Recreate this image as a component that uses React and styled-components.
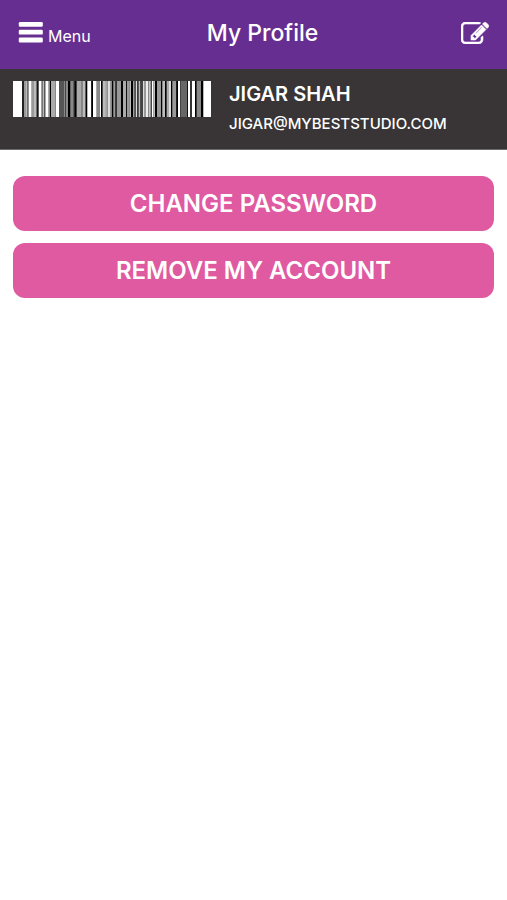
import React from "react";
import styled, { createGlobalStyle } from "styled-components";

const GlobalStyle = createGlobalStyle`
  *, *::before, *::after { box-sizing: border-box; }
  body {
    margin: 0;
    background: #fff;
    color: #fff;
    font-family: Inter, "Open Sans", sans-serif;
  }
`;

const Header = styled.header`
  display: grid;
  grid-template-columns: 1fr auto 1fr;
  align-items: center;
  height: 69px;
  padding: 0 18px 3px;
  background: #672e91;
`;

const HeaderButton = styled.button`
  display: flex;
  align-items: flex-start;
  justify-self: ${({ $side }) => $side};
  gap: 5px;
  padding: 0;
  border: 0;
  background: none;
  color: inherit;
  font: 400 16px/20px Inter, sans-serif;
  cursor: pointer;
`;

const MenuLabel = styled.span`
  padding-top: 5px;
`;

const Title = styled.h1`
  margin: 0;
  padding-left: 18px;
  font-size: 23px;
  line-height: 28px;
  font-weight: 500;
`;

const Profile = styled.section`
  display: grid;
  grid-template-columns: 198px 1fr;
  gap: 18px;
  padding: 12px 13px 15px;
  border-bottom: 1px solid #6e6b6c;
  background: #393536;
`;

const Code = styled.svg`
  display: block;
  width: 198px;
  height: 36px;
`;

const Name = styled.h2`
  margin: 0;
  font-size: 20px;
  line-height: 26px;
  font-weight: 600;
`;

const Email = styled.p`
  margin: 7px 0 0;
  font-size: 15px;
  line-height: 20px;
  font-weight: 500;
`;

const Actions = styled.main`
  display: flex;
  flex-direction: column;
  gap: 12px;
  padding: 26px 13px;
`;

const ActionButton = styled.button`
  width: 100%;
  height: 55px;
  padding: 0;
  border: 0;
  border-radius: 12px;
  background: #df5aa0;
  color: #fff;
  font: 600 24px/30px Inter, sans-serif;
  cursor: pointer;
`;

// Each stripe is [start, colour]; it runs up to the start of the next one.
const stripes = [
  [0, "#fff"], [27, "#222"], [33, "#999"], [39, "#bbb"], [43, "#777"], [47, "#fff"],
  [56, "#999"], [61, "#bbb"], [70, "#777"], [73, "#000"], [77, "#fff"], [86, "#666"],
  [89, "#bbb"], [93, "#555"], [96, "#aaa"], [98, "#fff"], [107, "#888"], [111, "#000"],
  [114, "#aaa"], [126, "#888"], [129, "#fff"], [138, "#555"], [153, "#888"], [156, "#444"],
  [159, "#888"], [165, "#000"], [172, "#888"], [182, "#444"], [185, "#000"], [191, "#aaa"],
  [206, "#888"], [210, "#bbb"], [218, "#000"], [223, "#fff"], [235, "#000"], [240, "#fff"],
  [251, "#888"], [261, "#fff"], [264, "#000"], [269, "#bbb"], [278, "#eee"], [281, "#888"],
  [284, "#ddd"], [293, "#888"], [297, "#000"], [301, "#999"], [307, "#333"], [312, "#999"],
  [324, "#000"], [330, "#aaa"], [339, "#111"], [342, "#999"], [350, "#bbb"], [354, "#000"],
  [361, "#ddd"], [364, "#555"], [369, "#ddd"], [373, "#222"], [377, "#bbb"], [382, "#444"],
  [390, "#ddd"], [395, "#888"], [398, "#eee"], [405, "#888"], [409, "#fff"], [413, "#444"],
  [417, "#fff"], [421, "#bbb"], [426, "#000"], [432, "#999"], [444, "#000"], [448, "#bbb"],
  [456, "#000"], [461, "#aaa"], [468, "#ddd"], [474, "#000"], [478, "#999"], [490, "#000"],
  [495, "#fff"], [501, "#444"], [504, "#666"], [522, "#111"], [525, "#fff"], [531, "#333"],
  [537, "#fff"], [546, "#000"], [551, "#888"], [564, "#000"], [571, "#fff"],
];

function Barcode() {
  return (
    <Code viewBox="0 0 594 108" preserveAspectRatio="none" role="img" aria-label="Member barcode">
      {stripes.map(([x, fill], i) => (
        <rect key={x} x={x} width={(stripes[i + 1]?.[0] ?? 594) - x} height="108" fill={fill} />
      ))}
    </Code>
  );
}

function BarsIcon() {
  return (
    <svg width="25" height="22" viewBox="0 0 25 22" fill="#fff" aria-hidden="true">
      <rect x="0.8" y="1" width="24" height="4.8" rx="1.2" />
      <rect x="0.8" y="8.8" width="24" height="4.8" rx="1.2" />
      <rect x="0.8" y="16.6" width="24" height="4.8" rx="1.2" />
    </svg>
  );
}

function EditIcon() {
  return (
    <svg width="28" height="22" viewBox="0 128 1792 1408" fill="#fff" stroke="#fff" strokeWidth="36" aria-hidden="true">
      <path d="M888 1184l116-116-152-152-116 116v56h96v96h56zm440-720q-16-16-33 1l-350 350q-17 17-1 33t33-1l350-350q17-17 1-33zm80 594v190q0 119-84.5 203.5t-203.5 84.5h-832q-119 0-203.5-84.5t-84.5-203.5v-832q0-119 84.5-203.5t203.5-84.5h832q63 0 117 25 15 7 18 23 3 17-9 29l-49 49q-14 14-32 8-23-6-45-6h-832q-66 0-113 47t-47 113v832q0 66 47 113t113 47h832q66 0 113-47t47-113v-126q0-13 9-22l64-64q15-15 35-7t20 29zm-96-738l288 288-672 672h-288v-288zm444 132l-92 92-288-288 92-92q28-28 68-28t68 28l152 152q28 28 28 68t-28 68z" />
    </svg>
  );
}

export default function App() {
  return (
    <>
      <GlobalStyle />
      <Header>
        <HeaderButton type="button" $side="start">
          <BarsIcon />
          <MenuLabel>Menu</MenuLabel>
        </HeaderButton>
        <Title>My Profile</Title>
        <HeaderButton type="button" $side="end" aria-label="Edit profile">
          <EditIcon />
        </HeaderButton>
      </Header>
      <Profile>
        <Barcode />
        <div>
          <Name>JIGAR SHAH</Name>
          <Email>JIGAR@MYBESTSTUDIO.COM</Email>
        </div>
      </Profile>
      <Actions>
        <ActionButton type="button">CHANGE PASSWORD</ActionButton>
        <ActionButton type="button">REMOVE MY ACCOUNT</ActionButton>
      </Actions>
    </>
  );
}
